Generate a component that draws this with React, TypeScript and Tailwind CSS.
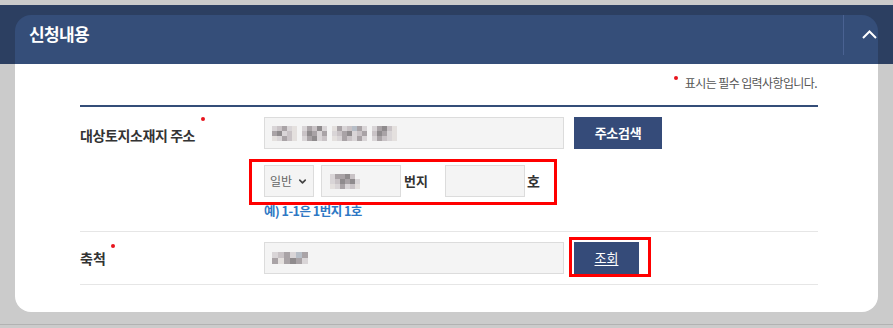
import React from 'react';
import { ChevronDown } from 'lucide-react';

// pixelated (masked) values, one letter per 5px cell
const shades: Record<string, string> = {
  a: '#c9c3c6',
  b: '#a9a3a6',
  c: '#d9d5d7',
  d: '#8f8b8d',
  e: '#b7bec7',
  f: '#e4e0de',
  '.': 'transparent',
};

function Mosaic({ rows, cell = 5 }: { rows: string[]; cell?: number }) {
  return (
    <div className="flex flex-col">
      {rows.map((row, i) => (
        <div key={i} className="flex">
          {row.split('').map((ch, j) => (
            <span key={j} style={{ width: cell, height: cell, backgroundColor: shades[ch] }} />
          ))}
        </div>
      ))}
    </div>
  );
}

function Dot({ className = '' }: { className?: string }) {
  return <span className={`inline-block w-[4px] h-[4px] rounded-full bg-[#e8141d] shrink-0 ${className}`} />;
}

const font = { fontFamily: '"Noto Sans CJK KR", "Noto Sans", sans-serif' };

export default function App() {
  return (
    <div className="w-[893px] h-[328px] overflow-hidden bg-[#cbcbcb] pt-[5px]" style={font}>
      {/* header band */}
      <div className="bg-[#2c3f61] pt-[10px] px-[15px]">
        <div className="h-[49px] bg-[#354e79] rounded-t-[16px] flex items-start">
          <h2 className="pl-[14px] pt-[7px] text-[17px] leading-[24px] font-bold text-white tracking-[-0.6px]">
            신청내용
          </h2>
          <div className="ml-auto w-[1px] h-[40px] bg-[#4a6292]" />
          <button className="w-[34px] h-[40px] flex items-start pl-[18px] pt-[15px]">
            <svg width="15" height="9" viewBox="0 0 15 9" fill="none">
              <path d="M1 8L7.5 1.5L14 8" stroke="#ffffff" strokeWidth="2" />
            </svg>
          </button>
        </div>
      </div>

      {/* body */}
      <div className="mx-[15px] h-[248px] bg-white rounded-b-[16px] pl-[65px] pr-[60px]">
        <div className="h-[41px] flex justify-end items-start pt-[11px]">
          <Dot className="mr-[7px] mt-[1px]" />
          <span className="text-[12px] leading-[16px] text-[#555] tracking-[-0.6px] mr-[1px]">
            표시는 필수 입력사항입니다.
          </span>
        </div>
        <div className="h-[2px] bg-[#344d78]" />

        {/* row: address */}
        <div className="flex border-b border-[#e6e6e6] pt-[10px] pb-[12px]">
          <div className="w-[184px] shrink-0 flex items-start h-[32px]">
            <span className="self-center mt-[3px] text-[14px] leading-[18px] font-bold text-[#333] tracking-[-0.4px]">
              대상토지소재지 주소
            </span>
            <Dot className="ml-[6px]" />
          </div>
          <div className="flex flex-col">
            <div className="flex gap-[10px]">
              <div className="w-[300px] h-[32px] bg-[#f4f4f4] border border-[#dcdcdc] flex items-center pl-[7px]">
                <Mosaic
                  rows={[
                    'cabcf.cbadc.fbcaebc.cbdaf',
                    'bdcaf.adbcb.cabdcab.adbcf',
                    'fcbaf.cbdca.fcbacbc.cbacf',
                  ]}
                />
              </div>
              <button className="w-[88px] h-[32px] bg-[#354b79] text-white text-[13px] font-bold tracking-[-0.3px]">
                주소검색
              </button>
            </div>

            <div className="mt-[10px] -ml-[15px] w-[308px] h-[46px] border-[3px] border-[#ff0000] pl-[12px] pt-[3px]">
              <div className="flex items-center">
                <div className="w-[50px] h-[32px] bg-[#f4f4f4] border border-[#dcdcdc] flex items-center pl-[5px] gap-[5px]">
                  <span className="text-[12px] text-[#666]">일반</span>
                  <ChevronDown size={11} strokeWidth={3.5} color="#444" />
                </div>
                <div className="ml-[7px] w-[80px] h-[32px] bg-[#f4f4f4] border border-[#dcdcdc] flex items-center pl-[8px]">
                  <Mosaic rows={['cbbda.', 'cadbdc', 'fcbcaf']} />
                </div>
                <span className="ml-[3px] text-[13px] font-bold text-[#333]">번지</span>
                <div className="ml-[17px] w-[80px] h-[32px] bg-[#f4f4f4] border border-[#dcdcdc]" />
                <span className="ml-[2px] text-[14px] font-bold text-[#333]">호</span>
              </div>
            </div>
            <p className="-mt-[2px] text-[12.5px] leading-[16px] font-bold text-[#2f78c4] tracking-[-0.5px]">
              예) 1-1은 1번지 1호
            </p>
          </div>
        </div>

        {/* row: scale */}
        <div className="flex border-b border-[#e6e6e6] py-[10px]">
          <div className="w-[184px] shrink-0 flex items-start h-[32px]">
            <span className="self-center text-[14px] leading-[18px] font-bold text-[#333]">축척</span>
            <Dot className="ml-[5px] mt-[2px]" />
          </div>
          <div className="flex items-start">
            <div className="w-[300px] h-[32px] bg-[#f4f4f4] border border-[#dcdcdc] flex items-center pl-[7px]">
              <Mosaic cell={6} rows={['cabceb', 'bfbdbc']} />
            </div>
            <div className="ml-[5px] -mt-[5px] -mb-[3px] border-[3px] border-[#ff0000] pl-[2px] pt-[2px] pr-[9px]">
              <button className="w-[65px] h-[32px] bg-[#354b79] text-white text-[13px] underline underline-offset-2">
                조회
              </button>
            </div>
          </div>
        </div>
      </div>

      <div className="mt-[12px] h-[1px] bg-[#b2b2b2]" />
    </div>
  );
}
